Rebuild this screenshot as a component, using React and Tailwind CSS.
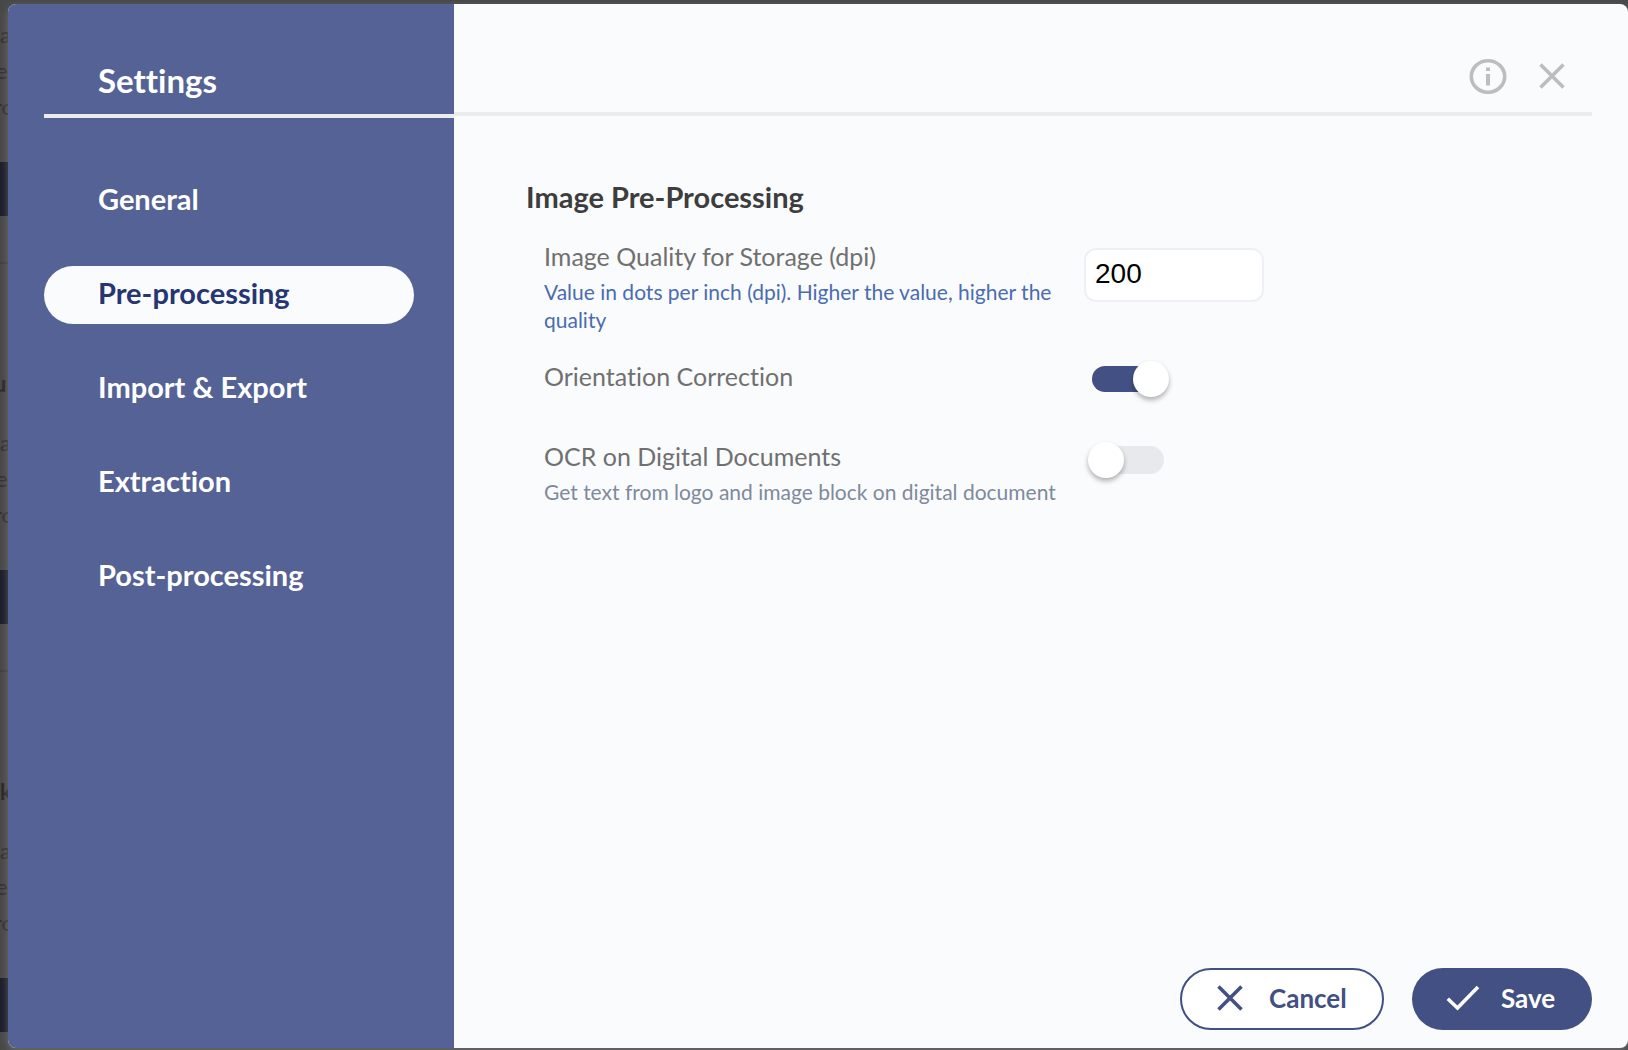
import { useState } from "react";
import clsx from "clsx";

const TABS = [
  "General",
  "Pre-processing",
  "Import & Export",
  "Extraction",
  "Post-processing",
];

function InfoIcon() {
  return (
    <svg width="38" height="36" viewBox="0 0 38 36" fill="none" aria-hidden="true">
      <ellipse cx="19" cy="18.500" rx="16.7" ry="15.8" stroke="#bdbdbd" strokeWidth="3.6" />
      <path d="M17 9.500h4v3.5h-4zM17 16h4v11.500h-4z" fill="#bdbdbd" />
    </svg>
  );
}

function CrossIcon() {
  return (
    <svg width="26" height="26" viewBox="0 0 26 26" fill="none" aria-hidden="true">
      <path d="M1.500 1.500 24.500 24.500M24.500 1.500 1.500 24.500" stroke="currentColor" strokeWidth="3.600" />
    </svg>
  );
}

function CheckIcon() {
  return (
    <svg width="34" height="26" viewBox="0 0 34 26" fill="none" aria-hidden="true">
      <path d="M1.800 13.800 11.500 23 32 2" stroke="currentColor" strokeWidth="3.600" />
    </svg>
  );
}

// Page content that stays visible beside the dialog
function BackdropCard({ title }) {
  return (
    <div className="flex h-[408px] shrink-0 flex-col text-[22px] leading-9 text-[#2e2e2e]">
      <div className="mb-[23px] h-9 shrink-0 font-bold text-[#262626]">{title}</div>
      <div>a</div>
      <div className="-ml-1">e</div>
      <div className="-ml-1.5">ro</div>
      <div className="mt-[37px] h-[54px] shrink-0 bg-[#1c1d2b]" />
      <div className="mt-[46px] grow border-t-2 border-[#404040]" />
    </div>
  );
}

function Switch({ id, checked, onChange }) {
  return (
    <input
      id={id}
      type="checkbox"
      role="switch"
      checked={checked}
      onChange={(e) => onChange(e.target.checked)}
      className="flex h-7 w-[72px] cursor-pointer appearance-none items-center rounded-full bg-[#e8e9ed] before:-ml-1 before:size-9 before:shrink-0 before:rounded-full before:bg-white before:shadow-[0_3px_5px_rgba(0,0,0,0.3)] checked:h-[26px] checked:bg-[#425084] checked:before:ml-[41px]"
    />
  );
}

function SettingRow({ id, label, hint, hintClass, children }) {
  return (
    <div className="grid grid-cols-[minmax(0,524px)_auto] gap-4 pb-6">
      <div className="min-h-14">
        <label htmlFor={id} className="block text-[25px] leading-9 text-[#707070]">
          {label}
        </label>
        {hint && <p className={clsx("mt-1 text-[21px] leading-7", hintClass)}>{hint}</p>}
      </div>
      {children}
    </div>
  );
}

export default function App() {
  const [tab, setTab] = useState("Pre-processing");
  const [dpi, setDpi] = useState("200");
  const [orientation, setOrientation] = useState(true);
  const [ocr, setOcr] = useState(false);

  return (
    <div className="relative min-h-screen overflow-hidden bg-[#484848] font-['Lato',sans-serif] [font-variant-ligatures:none]">
      <div className="absolute top-0 left-0 -mt-[42px] w-6" aria-hidden="true">
        <BackdropCard />
        <BackdropCard title={<div className="-ml-1.5">u</div>} />
        <BackdropCard title="k" />
      </div>

      <div className="relative flex min-h-screen pt-1 pb-0.5 pl-2">
        <div
          role="dialog"
          aria-label="Settings"
          className="flex grow overflow-hidden rounded-lg bg-[#fafbfd] shadow-[0_3px_8px_rgba(140,140,140,0.55)]"
        >
          {/* Sidebar */}
          <aside className="w-[446px] shrink-0 bg-[#556295] pl-9 text-white">
            <div className="flex h-[114px] items-end border-b-4 border-[#ececec] pb-3.5 pl-[54px]">
              <h1 className="text-[33px] leading-10 font-bold">Settings</h1>
            </div>
            <nav className="mt-[54px] mr-10 flex flex-col gap-9">
              {TABS.map((name) => (
                <button
                  key={name}
                  type="button"
                  onClick={() => setTab(name)}
                  className={clsx(
                    "h-[58px] rounded-full pb-1 pl-[54px] text-left text-[29px] leading-9 font-bold",
                    tab === name && "bg-[#fafbfd] text-[#263672]"
                  )}
                >
                  {name}
                </button>
              ))}
            </nav>
          </aside>

          {/* Content */}
          <section className="flex min-w-0 grow flex-col pr-9">
            <header className="flex h-28 items-center justify-end gap-8 border-b-4 border-[#ececec] pt-9 pr-[27px] text-[#bdbdbd]">
              <button type="button" aria-label="Information">
                <InfoIcon />
              </button>
              <button type="button" aria-label="Close">
                <CrossIcon />
              </button>
            </header>

            <main className="grow pt-[63px] pl-[72px]">
              <h2 className="mb-[23px] text-[29px] leading-9 font-bold text-[#3d3d3d]">
                Image Pre-Processing
              </h2>
              <div className="pl-[18px]">
                <SettingRow
                  id="dpi"
                  label="Image Quality for Storage (dpi)"
                  hint="Value in dots per inch (dpi). Higher the value, higher the quality"
                  hintClass="text-[#4a6cb0]"
                >
                  <input
                    id="dpi"
                    type="text"
                    value={dpi}
                    onChange={(e) => setDpi(e.target.value)}
                    className="mt-2.5 h-[54px] w-[180px] rounded-xl border-2 border-[#eff0f5] bg-white px-[9px] pb-0.5 font-['Liberation_Sans',sans-serif] text-[28px] text-black"
                  />
                </SettingRow>
                <SettingRow id="orientation" label="Orientation Correction">
                  <div className="pt-2 pl-2">
                    <Switch id="orientation" checked={orientation} onChange={setOrientation} />
                  </div>
                </SettingRow>
                <SettingRow
                  id="ocr"
                  label="OCR on Digital Documents"
                  hint="Get text from logo and image block on digital document"
                  hintClass="text-[#7d8a9c]"
                >
                  <div className="pt-2 pl-2">
                    <Switch id="ocr" checked={ocr} onChange={setOcr} />
                  </div>
                </SettingRow>
              </div>
            </main>

            <footer className="flex justify-end gap-7 pb-[18px] text-[26px] font-bold">
              <button
                type="button"
                className="flex h-[62px] w-[204px] items-center gap-[26px] rounded-full border-2 border-[#425084] bg-white pb-0.5 pl-[35px] text-[#425084]"
              >
                <CrossIcon />
                Cancel
              </button>
              <button
                type="button"
                className="flex h-[62px] w-[180px] items-center gap-[21px] rounded-full bg-[#425084] pb-0.5 pl-[34px] text-white"
              >
                <CheckIcon />
                Save
              </button>
            </footer>
          </section>
        </div>
      </div>
    </div>
  );
}
